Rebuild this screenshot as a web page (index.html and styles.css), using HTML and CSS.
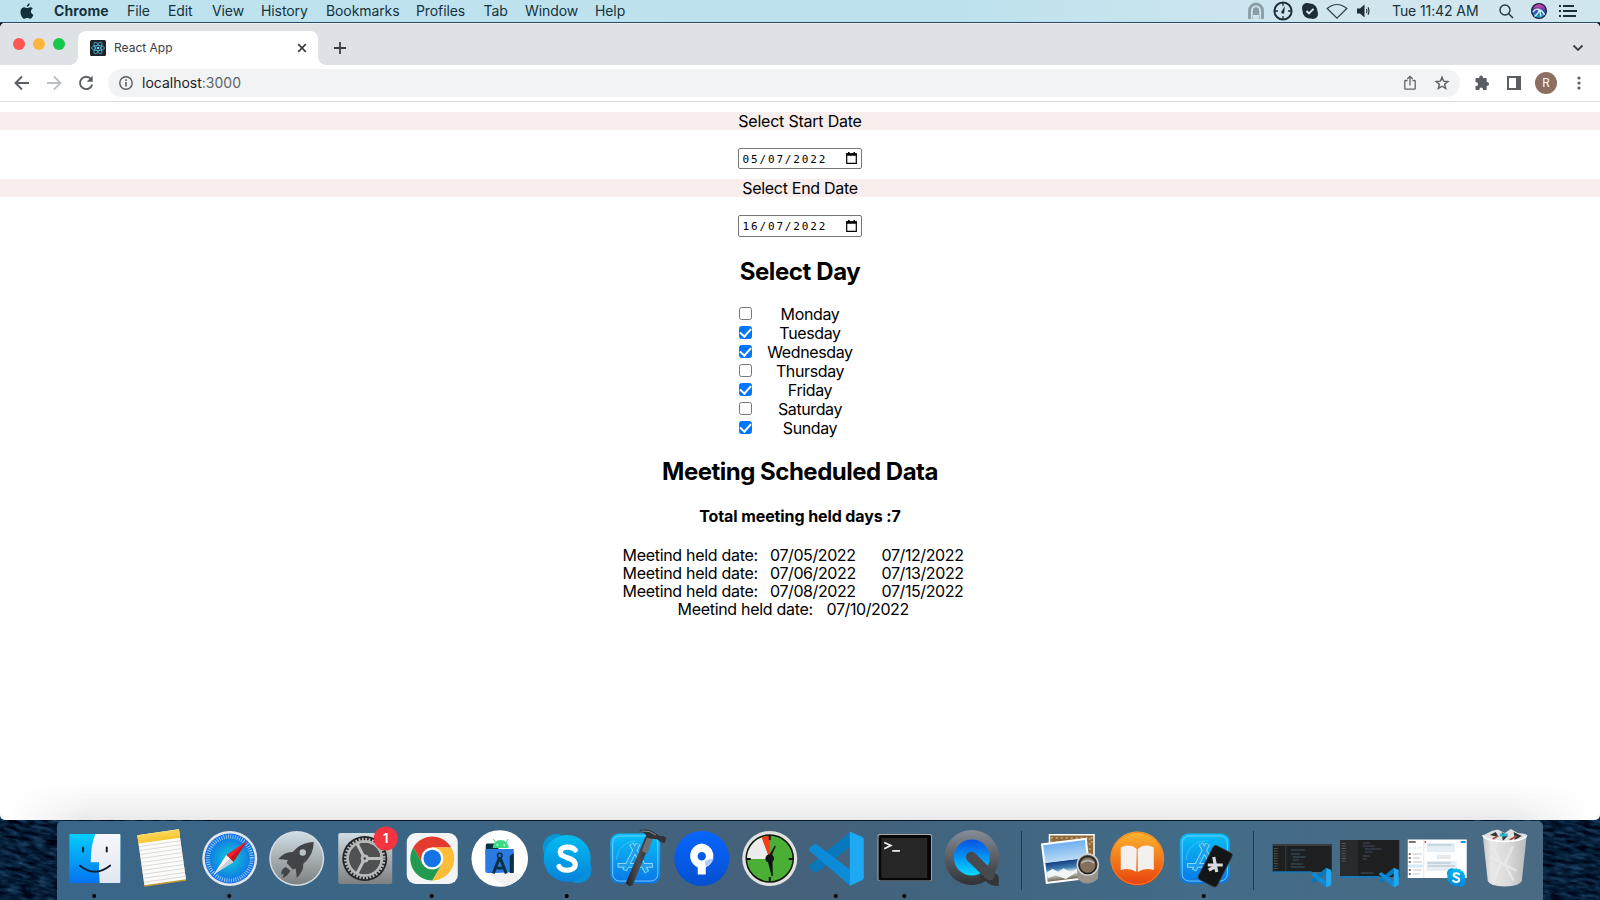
FILE: index.html
```html
<!DOCTYPE html>
<html lang="en">
<head>
<meta charset="utf-8">
<title>React App</title>
<link rel="stylesheet" href="styles.css">
</head>
<body>
<svg class="wallpaper" width="1600" height="83">
  <filter id="waves" x="0" y="0" width="100%" height="100%" color-interpolation-filters="sRGB"><feTurbulence type="fractalNoise" baseFrequency="0.07 0.28" numOctaves="3" seed="4"/><feColorMatrix values="0.3 0 0 0 -0.13  0.45 0 0 0 -0.11  0.55 0 0 0 -0.06  0 0 0 0 1"/></filter>
  <g transform="rotate(12 60 40)"><rect x="-60" y="-60" width="260" height="200" filter="url(#waves)"/></g>
  <g transform="rotate(10 1560 40)"><rect x="1460" y="-60" width="220" height="200" filter="url(#waves)"/></g>
</svg>
<svg width="0" height="0" class="defs">
  <defs>
    <linearGradient id="gFinder" x2="0" y2="1"><stop stop-color="#04cdfd"/><stop offset="1" stop-color="#0573f0"/></linearGradient>
    <linearGradient id="gFinderW" x2="0" y2="1"><stop stop-color="#f6f7fb"/><stop offset="1" stop-color="#e2e7f0"/></linearGradient>
    <linearGradient id="gGrey" x2="0" y2="1"><stop stop-color="#cfdde3"/><stop offset="1" stop-color="#7e8081"/></linearGradient>
    <radialGradient id="gSafari"><stop stop-color="#08cfd8"/><stop offset="1" stop-color="#1569e8"/></radialGradient>
    <linearGradient id="gSkype" x2="0" y2="1"><stop stop-color="#04bdf0"/><stop offset="1" stop-color="#0582db"/></linearGradient>
    <linearGradient id="gXcode" x2="0" y2="1"><stop stop-color="#07c0f7"/><stop offset="1" stop-color="#0b76e6"/></linearGradient>
    <linearGradient id="gTree" x2="0" y2="1"><stop stop-color="#0766ff"/><stop offset="1" stop-color="#0450cf"/></linearGradient>
    <linearGradient id="gQt" x2="0" y2="1"><stop stop-color="#858d98"/><stop offset="1" stop-color="#303134"/></linearGradient>
    <linearGradient id="gQtIn" x2="0" y2="1"><stop stop-color="#0752e4"/><stop offset="1" stop-color="#03d8ff"/></linearGradient>
    <linearGradient id="gBook" x2="0" y2="1"><stop stop-color="#fdb62e"/><stop offset="1" stop-color="#e9410d"/></linearGradient>
    <linearGradient id="gSea" x2="0" y2="1"><stop stop-color="#6fb0f0"/><stop offset=".48" stop-color="#b9daf5"/><stop offset=".5" stop-color="#173f87"/><stop offset=".68" stop-color="#3f7fae"/><stop offset=".8" stop-color="#e3eef0"/><stop offset="1" stop-color="#6d6350"/></linearGradient>
    <linearGradient id="gNote" x2="0" y2="1"><stop stop-color="#fbd95c"/><stop offset="1" stop-color="#f5c52d"/></linearGradient>
    <linearGradient id="gBin" x2="1" y2="0"><stop stop-color="#c5c6c8"/><stop offset=".2" stop-color="#e8e8e9"/><stop offset=".6" stop-color="#d9d9da"/><stop offset="1" stop-color="#b9babc"/></linearGradient>
    <linearGradient id="gHandle" x2="1" y2="0"><stop stop-color="#222327"/><stop offset=".5" stop-color="#4c4e54"/><stop offset="1" stop-color="#1c1d20"/></linearGradient>
    <linearGradient id="gSiri" x2="0" y2="1"><stop stop-color="#e04aa8"/><stop offset=".5" stop-color="#3d3fa8"/><stop offset="1" stop-color="#1aa9c9"/></linearGradient>
    <symbol id="vscode" viewBox="0 0 55 55" overflow="visible">
      <path d="M1.500 34Q-.5 36 1.500 38L5 41Q6.500 42.500 8.500 41L41 16.500V1Z" fill="#0878bd"/>
      <path d="M1.500 20.500Q-.5 18.500 1.500 16.500L5 13.500Q6.500 12.500 8.500 13.800L41 38.500V54.500Z" fill="#0c8bd8"/>
      <path d="M41 .500L53.500 6Q55 7 55 8.500V46.500Q55 48 53.500 49L41 55Z" fill="#1fa9f4"/>
    </symbol>
    <symbol id="skype" viewBox="0 0 50 50" overflow="visible">
      <circle cx="14" cy="14" r="13.500" fill="#0796d8"/><circle cx="36" cy="36" r="13.500" fill="#0a8fdd"/>
      <circle cx="25" cy="25" r="23.500" fill="url(#gSkype)"/>
      <path d="M33 16.500C30 12.500 18 12 18 18.500C18 25.500 33 23 33 31C33 38 20 38.500 16.800 33" fill="none" stroke="#fff" stroke-width="5.200" stroke-linecap="round"/>
    </symbol>
    <symbol id="xcode" viewBox="0 0 52 52" overflow="visible">
      <rect x=".5" y=".5" width="51" height="51" rx="9" fill="url(#gXcode)"/>
      <rect x="3" y="3" width="46" height="46" rx="7" fill="none" stroke="#7fd5fa" stroke-width=".9"/>
      <g fill="none" stroke="#8bd9fb" stroke-width="5"><path d="M15 38L29 11M22 11L38 40M8 33H44" /></g>
      <g fill="none" stroke="#1e9fee" stroke-width="3"><path d="M15.500 37.500L28.700 11.500M22.300 11.500L37.700 39.500M9 33H43"/></g>
      <path d="M7 27A20 20 0 0 1 26 8" fill="none" stroke="#4cc5f8" stroke-width=".8"/>
    </symbol>
  </defs>
</svg>

<header class="menubar">
  <svg class="apple" width="14" height="16" viewBox="0 0 14 16"><path d="M9.800 .2C9.900 2 8.400 3.700 6.800 3.700C6.700 2 8.100.500 9.800.2ZM12.800 5.500C9.900 7.300 10.500 10.500 13.500 11.700C12.700 13.800 11.400 15.800 10 15.800C8.900 15.800 8.500 15.100 7.200 15.100C5.900 15.100 5.400 15.800 4.400 15.800C2.600 15.800.500 12 .500 8.900C.500 5.900 2.300 4.300 4.300 4.300C5.500 4.300 6.500 5.100 7.200 5.100C8 5.100 9 4.200 10.400 4.200C11.400 4.200 12.300 4.700 12.800 5.500Z" fill="#12303b"/></svg>
  <nav class="menus"><b>Chrome</b><span>File</span><span>Edit</span><span>View</span><span>History</span><span>Bookmarks</span><span>Profiles</span><span>Tab</span><span>Window</span><span>Help</span></nav>
  <div class="status">
    <svg width="18" height="20" viewBox="0 0 18 20"><path d="M2.500 18V9.500A6.500 6.500 0 0 1 15.500 9.500V18" fill="none" stroke="#8b9ea6" stroke-width="2.800"/><path d="M5.800 14V9.500A3.200 3.200 0 0 1 12.200 9.500V14Z" fill="#8b9ea6"/><path d="M5.500 14.500V18M12.500 14.500V18" stroke="#a8bac2"/></svg>
    <svg width="20" height="20" viewBox="0 0 20 20"><circle cx="10" cy="10" r="8.600" fill="none" stroke="#1d2e36" stroke-width="2"/><path d="M10 2V5M10 15V18M2 10H5M15 10H18" stroke="#1d2e36" stroke-width="1.300"/><path d="M11.800 5L11.300 11A1.500 1.500 0 1 1 8.900 10Z" fill="#1d2e36"/></svg>
    <svg width="18" height="20" viewBox="0 0 18 20"><circle cx="6" cy="7" r="5" fill="#1d2e36"/><circle cx="12" cy="13" r="5" fill="#1d2e36"/><circle cx="9" cy="10" r="7.500" fill="#1d2e36"/><path d="M5.500 10L8 12.500L12.500 7.800" fill="none" stroke="#d0e6ee" stroke-width="1.900"/></svg>
    <svg class="wifi" width="22" height="18" viewBox="0 0 22 18"><path d="M1.200 5.500Q11-2.500 20.800 5.500L11 15.200Z" fill="none" stroke="#2d414a" stroke-width="1.200" transform="translate(0 1)"/></svg>
    <svg width="15" height="16" viewBox="0 0 15 16"><path d="M1 5.500H4L8.500 1.500V14.500L4 10.500H1Z" fill="#1d2e36"/><path d="M10.500 6Q11.500 8 10.500 10M12 4.300Q14 8 12 11.700" fill="none" stroke="#1d2e36" stroke-width="1.100"/></svg>
    <span class="clock">Tue 11:42 AM</span>
    <svg width="16" height="16" viewBox="0 0 16 16"><circle cx="6" cy="7" r="5" fill="none" stroke="#24363e" stroke-width="1.400"/><path d="M9.700 10.700L14 15" stroke="#24363e" stroke-width="1.500"/></svg>
    <svg class="siri" width="16" height="16" viewBox="0 0 16 16"><circle cx="8" cy="8" r="8" fill="#172047"/><circle cx="8" cy="8" r="6.700" fill="url(#gSiri)"/><path d="M1.800 9Q5 5 8 6.500Q12 8 13.500 12M8 6.500Q8 10 3.500 13.500M8.500 7L10 13.500" fill="none" stroke="#c5f4fa" stroke-width="1.400"/></svg>
    <svg class="list" width="18" height="12" viewBox="0 0 18 12"><path d="M0 1H2M0 6H2M0 11H2M4 1H15M4 6H18M4 11H17" stroke="#1d2e36" stroke-width="1.900"/></svg>
  </div>
</header>

<main class="window">
  <div class="tabstrip">
    <div class="lights"><i class="red"></i><i class="amber"></i><i class="green"></i></div>
    <div class="tab">
      <svg width="16" height="16" viewBox="0 0 16 16"><rect width="16" height="16" rx="1.500" fill="#20232a"/><g fill="none" stroke="#4fb9d6" stroke-width=".8"><ellipse cx="8" cy="8" rx="6.500" ry="2.600"/><ellipse cx="8" cy="8" rx="6.500" ry="2.600" transform="rotate(60 8 8)"/><ellipse cx="8" cy="8" rx="6.500" ry="2.600" transform="rotate(120 8 8)"/></g><circle cx="8" cy="8" r="1.300" fill="#61dafb"/></svg>
      <span>React App</span>
      <svg width="10" height="10" viewBox="0 0 10 10"><path d="M1.200 1.200L8.800 8.800M8.800 1.200L1.200 8.800" stroke="#3c4043" stroke-width="1.700"/></svg>
    </div>
    <svg class="plus" width="12" height="12" viewBox="0 0 12 12"><path d="M6 0V12M0 6H12" stroke="#3c4043" stroke-width="1.800"/></svg>
    <svg class="chev" width="12" height="8" viewBox="0 0 12 8"><path d="M1.500 1.500L6 6L10.500 1.500" fill="none" stroke="#3c4043" stroke-width="1.800"/></svg>
  </div>
  <div class="toolbar">
    <svg width="16" height="16" viewBox="0 0 16 16"><path d="M15 8H2M8 1.500L1.500 8L8 14.500" fill="none" stroke="#5a5e62" stroke-width="1.800"/></svg>
    <svg width="16" height="16" viewBox="0 0 16 16"><path d="M1 8H14M8 1.500L14.500 8L8 14.500" fill="none" stroke="#bcbfc2" stroke-width="1.800"/></svg>
    <svg width="16" height="16" viewBox="0 0 16 16"><path d="M13 4A6.200 6.200 0 1 0 14.200 9.500" fill="none" stroke="#5a5e62" stroke-width="1.900"/><path d="M14.700 .8V6.800H8.700Z" fill="#5a5e62"/></svg>
    <div class="omnibox">
      <svg width="14" height="14" viewBox="0 0 14 14"><circle cx="7" cy="7" r="6.200" fill="none" stroke="#5a5e62" stroke-width="1.400"/><path d="M7 6V10.500M7 3.300V4.900" stroke="#5a5e62" stroke-width="1.600"/></svg>
      <span class="url">localhost<em>:3000</em></span>
      <svg width="12" height="16" viewBox="0 0 12 16"><path d="M3.500 5.500H1.500Q.8 5.500.8 6.200V13.500Q.8 14.200 1.500 14.200H10.500Q11.200 14.200 11.200 13.500V6.200Q11.200 5.500 10.500 5.500H8.500M6 10.500V1.500M3.300 4L6 1.300L8.700 4" fill="none" stroke="#5f6368" stroke-width="1.300"/></svg>
      <svg width="16" height="16" viewBox="0 0 16 16"><path d="M8 2.200L9.600 6.200L13.900 6.500L10.600 9.300L11.700 13.500L8 11.200L4.300 13.500L5.400 9.300L2.100 6.500L6.400 6.200Z" fill="none" stroke="#5a5e62" stroke-width="1.400"/></svg>
    </div>
    <svg width="16" height="16" viewBox="0 0 16 16"><path d="M1.500 4Q1.500 3 2.500 3H5.200V2.500A1.900 1.900 0 0 1 9 2.500V3H11.700Q12.700 3 12.700 4V7H13.200A1.900 1.900 0 0 1 13.200 10.800H12.700V14Q12.700 15 11.700 15H9V14.300A1.800 1.800 0 0 0 5.400 14.300V15H2.500Q1.500 15 1.500 14V11H2.200A1.800 1.800 0 0 0 2.200 7.300H1.500Z" fill="#5a5e62"/></svg>
    <svg width="14" height="14" viewBox="0 0 14 14"><path d="M1 1H13V13H1Z" fill="none" stroke="#5a5e62" stroke-width="2"/><rect x="9" width="5" height="14" fill="#5a5e62"/></svg>
    <span class="avatar">R</span>
    <svg width="4" height="14" viewBox="0 0 4 14"><g fill="#5a5e62"><circle cx="2" cy="2" r="1.600"/><circle cx="2" cy="7" r="1.600"/><circle cx="2" cy="12" r="1.600"/></g></svg>
  </div>

  <section class="page">
    <div class="band start">Select Start Date</div>
    <div class="date"><span>05/07/2022</span><svg width="11" height="12" viewBox="0 0 11 12"><path d="M.7 2H10.300V11.300H.7Z" fill="none" stroke="#000" stroke-width="1.200"/><path d="M0 1.300H11V3.800H0ZM2 0H3.500V2H2ZM7.500 0H9V2H7.500Z"/></svg></div>
    <div class="band">Select End Date</div>
    <div class="date end"><span>16/07/2022</span><svg width="11" height="12" viewBox="0 0 11 12"><path d="M.7 2H10.300V11.300H.7Z" fill="none" stroke="#000" stroke-width="1.200"/><path d="M0 1.300H11V3.800H0ZM2 0H3.500V2H2ZM7.500 0H9V2H7.500Z"/></svg></div>
    <h2 class="pick">Select Day</h2>
    <div class="days">
      <label><input type="checkbox"><span>Monday</span></label>
      <label><input type="checkbox" checked><span>Tuesday</span></label>
      <label><input type="checkbox" checked><span>Wednesday</span></label>
      <label><input type="checkbox"><span>Thursday</span></label>
      <label><input type="checkbox" checked><span>Friday</span></label>
      <label><input type="checkbox"><span>Saturday</span></label>
      <label><input type="checkbox" checked><span>Sunday</span></label>
    </div>
    <h2 class="sched">Meeting Scheduled Data</h2>
    <h4>Total meeting held days :7</h4>
    <div class="rows">
      <div><span>Meetind held date:</span><span>07/05/2022</span><span>07/12/2022</span></div>
      <div><span>Meetind held date:</span><span>07/06/2022</span><span>07/13/2022</span></div>
      <div><span>Meetind held date:</span><span>07/08/2022</span><span>07/15/2022</span></div>
      <div class="single"><span>Meetind held date:</span><span>07/10/2022</span></div>
    </div>
  </section>
  <div class="shade"></div>
</main>

<footer class="dock">
  <svg class="app" viewBox="-33.750 0 67.500 79"><rect x="-25.400" y="13" width="51" height="49" rx="1" fill="url(#gFinder)"/><path d="M.6 13H24.600Q25.600 13 25.600 14V61Q25.600 62 24.600 62H5Q4 52 4.300 41.300H-4Q-4 24 .6 13Z" fill="url(#gFinderW)"/><path d="M-11.700 26.500V30.500M12 26.500V30.500" stroke="#14202c" stroke-width="2" stroke-linecap="round"/><path d="M-15 44.500Q0 57 15.500 44.500" fill="none" stroke="#10202e" stroke-width="1.700" stroke-linecap="round"/><circle cx="-.5" cy="75" r="2"/></svg>
  <svg class="app" viewBox="-33.750 0 67.500 79"><g transform="rotate(-8 0 37)"><rect x="-21" y="11" width="42" height="52" fill="#c49a35"/><rect x="-21" y="11" width="42" height="50.500" fill="#fbfbfa"/><path d="M-21 22.500H21M-21 26.500H21M-21 30.500H21M-21 34.500H21M-21 38.500H21M-21 42.500H21M-21 46.500H21M-21 50.500H21M-21 54.500H21M-21 58.500H21" stroke="#d4d3d0" stroke-width=".8"/><rect x="-21" y="11" width="42" height="8.500" fill="url(#gNote)"/></g></svg>
  <svg class="app" viewBox="-33.750 0 67.500 79"><circle cy="37.500" r="27.500" fill="#e3e6ea"/><circle cy="37.500" r="25" fill="url(#gSafari)"/><circle cy="37.500" r="22" fill="none" stroke="#a5dcf8" stroke-width="4" stroke-dasharray=".8 1.504"/><path d="M17.500 20L-3.500 34L3.500 41Z" fill="#f3202c"/><path d="M17.500 20L0 37.500L3.500 41Z" fill="#c21620"/><path d="M-16 53.500L-3.500 34L3.500 41Z" fill="#f5f5f5"/><path d="M-16 53.500L0 37.500L3.500 41Z" fill="#c9cdd3"/><circle cx="-.5" cy="75" r="2"/></svg>
  <svg class="app" viewBox="-33.750 0 67.500 79"><circle cy="37.500" r="27.500" fill="#d5dbdf"/><circle cy="37.500" r="26" fill="url(#gGrey)"/><path d="M17 21Q7 21-.5 27.500L-4 31Q-12 30.500-18.500 38L-9 39L-10 42L-4 48.500L-1 47.500L0 57Q7 50 6.500 43Q17 34 17 21ZM-11 46Q-16 48-15.500 54Q-14 52.500-13 52.500L-14 57Q-8 54-6.500 49.500Z" fill="#414449"/><circle cx="6" cy="31.500" r="3.200" fill="#b9c4ca"/></svg>
  <svg class="app" viewBox="-33.750 0 67.500 79"><rect x="-26.500" y="12" width="54" height="51" rx="2" fill="url(#gGrey)"/><circle cy="37.500" r="22.500" fill="#242526"/><circle cy="37.500" r="17" fill="none" stroke="#b5b7b7" stroke-width="3"/><circle cy="37.500" r="19.200" fill="none" stroke="#b5b7b7" stroke-width="3" stroke-dasharray="1.800 1.550"/><circle cy="37.500" r="15.500" fill="#505153"/><path d="M0 37.500L-7.500 23M0 37.500H17M0 37.500L-7.500 52" stroke="#bcbdbc" stroke-width="3"/><circle cy="37.500" r="4" fill="#bcbdbc"/><circle cy="37.500" r="1.300" fill="#444"/><circle cx="21" cy="17.500" r="12" fill="#f6343f"/><text class="badge" x="21" y="22">1</text></svg>
  <svg class="app" viewBox="-33.750 0 67.500 79"><rect x="-25" y="12" width="51" height="51" rx="9" fill="#f3f4f6"/><g transform="translate(.5 37.500)"><path d="M-19-11A22 22 0 0 1 19-11H0L-9.500 5.500Z" fill="#e33b2e"/><path d="M19-11A22 22 0 0 1 0 22L9.500 5.500L0-11Z" fill="#fdbd38"/><path d="M0 22A22 22 0 0 1-19-11L-9.500 5.500Q-3 12 9.500 5.500Z" fill="#229a50"/><circle r="11" fill="#fff"/><circle r="8.800" fill="#1473e6"/></g><circle cx="0" cy="75" r="2"/></svg>
  <svg class="app" viewBox="-33.750 0 67.500 79"><circle cy="37.500" r="28.300" fill="#fff"/><path d="M0 52L15 52L23 54A28 28 0 0 1 4 65L-11 53Z" fill="#f0f1f2"/><path d="M-14 29V24Q-14 22.500-12.500 22.500H-5L-1 28V34H-14Z" fill="#0a3042"/><path d="M-7 27A8 8 0 0 1 9 27Z" fill="#3ddc84"/><path d="M-4.500 21L-6.500 18M6.500 21L8.500 18" stroke="#3ddc84"/><circle cx="-2.500" cy="24" r=".8" fill="#fff"/><circle cx="4.500" cy="24" r=".8" fill="#fff"/><path d="M-14.500 28H14V50Q14 52-12 52Q-14.500 52-14.500 50Z" fill="#2b7ae0"/><path d="M-6.500 52.500L0 36L6.500 52.500M-5 46Q0 48.500 5 46" fill="none" stroke="#0a3042" stroke-width="3"/><circle cy="34.500" r="2.300" fill="#2b7ae0" stroke="#0a3042" stroke-width="1.500"/><path d="M10 52V35L14 32V52Z" fill="#0a3042"/></svg>
  <svg class="app" viewBox="-33.750 0 67.500 79"><use href="#skype" x="-24.500" y="12.500" width="50" height="50"/><circle cx="0" cy="75" r="2"/></svg>
  <svg class="app" viewBox="-33.750 0 67.500 79"><use href="#xcode" x="-25" y="12" width="51" height="51"/><path d="M11 15L17 18L-2 64Q-6 67-9 62Z" fill="url(#gHandle)"/><path d="M13 14L18.500 17L12.500 33L7 30Z" fill="#6d7076"/><path d="M4 9.500Q14 6.500 20 12L25 15L29 15L31.500 17L30 22L25.500 21L23 18.500L12.500 17Q11 11 4 9.500Z" fill="#303237"/><path d="M7 10Q15 9 21 14" fill="none" stroke="#8c9098"/></svg>
  <svg class="app" viewBox="-33.750 0 67.500 79"><circle cy="37.500" r="27.500" fill="url(#gTree)"/><path d="M0 22.500A12.500 12.500 0 0 0-4 46.500V53.500H4V46.500A12.500 12.500 0 0 0 0 22.500ZM0 31A4.200 4.200 0 1 1 0 39.400A4.200 4.200 0 1 1 0 31Z" fill="#fff" fill-rule="evenodd"/><path d="M3 40L12 37Q11 43 4 46Z" fill="#9fc1fb" opacity=".8"/></svg>
  <svg class="app" viewBox="-33.750 0 67.500 79"><circle cy="37.500" r="27.500" fill="#e1e2e0"/><circle cy="37.500" r="23.500" fill="#4caf35" stroke="#101510" stroke-width="1.500"/><path d="M0 38H-22.800A22.800 22.800 0 0 1-8 16.500Z" fill="#ececec"/><path d="M0 38L-8 16.500Q-4 14.700 0 14.700Z" fill="#fb3a1b"/><path d="M0 14V19M0 56V61M-23.500 38H-19M19 38H23.500" stroke="#111" stroke-width="2"/><path d="M0 37.500L5.500 25L-1.500 37ZM-2 37.500L2.500 55L2 37Z" stroke="#0d1a14" stroke-width="1.300"/><circle cy="37.500" r="4.300" fill="#0e1713"/></svg>
  <svg class="app" viewBox="-33.750 0 67.500 79"><use href="#vscode" x="-28" y="10" width="55" height="55"/><circle cx="-1" cy="75" r="2"/></svg>
  <svg class="app" viewBox="-33.750 0 67.500 79"><rect x="-27.200" y="13" width="54.500" height="47" rx="2" fill="#aaa9a6"/><rect x="-26.200" y="14" width="52.500" height="45.500" rx="1.500" fill="#060606"/><rect x="-23.500" y="17" width="46" height="40" fill="#262626"/><path d="M-20.500 21.500L-14 24.500L-20.500 27.800M-12.500 29.800H-4.800" fill="none" stroke="#eee" stroke-width="1.800"/><circle cx="-.5" cy="75" r="2"/></svg>
  <svg class="app" viewBox="-33.750 0 67.500 79"><circle cy="36.500" r="27.500" fill="url(#gQt)"/><path d="M10 48L20 51Q27 53 27 57V65Q18 65 14 60L8 56Z" fill="#333437"/><circle cy="36.500" r="18" fill="url(#gQtIn)"/><path d="M-.5 36L18 54" stroke="#48494e" stroke-width="10.500" stroke-linecap="round"/></svg>
  <i class="sep"></i>
  <svg class="app" viewBox="-33.750 0 67.500 79"><rect x="-21" y="13" width="46" height="38" fill="#fff"/><rect x="-19.500" y="14.500" width="43" height="35" fill="#8d6a3f"/><path d="M-19 17H23M-19 21H23M20 17V48" stroke="#c29c66" stroke-dasharray="2 3" stroke-width="2"/><g transform="rotate(-7 -4 40)"><rect x="-26.500" y="19.500" width="46" height="41" fill="#fff"/><rect x="-24.500" y="21.500" width="42" height="37" fill="url(#gSea)"/><path d="M-24 49L-18 46L-13 50L-7 47L0 52L8 48L16 51V55L4 53L-6 58L-16 53L-24 55Z" fill="#f1f6f5"/></g><path d="M7 44L8 58Q17 67 28 58L29 44Z" fill="#9a948a"/><circle cx="18" cy="43.500" r="10.500" fill="#59544d" stroke="#d2d3d3" stroke-width="1.500"/><circle cx="18" cy="44" r="8.500" fill="#84705a" stroke="#222" stroke-width="1.400"/><path d="M11.500 42Q18 37 24.500 42" fill="none" stroke="#aeb4b3" stroke-width="2"/></svg>
  <svg class="app" viewBox="-33.750 0 67.500 79"><circle cx=".5" cy="37.500" r="27" fill="url(#gBook)"/><circle cx=".5" cy="37.500" r="26" fill="none" stroke="#f77f27"/><path d="M0 28Q-7 22-16 26.500V49Q-7 46-.5 51ZM1 28Q8 22 17 26.500V49Q8 46 1 51Z" fill="#f3f0ed"/></svg>
  <svg class="app" viewBox="-33.750 0 67.500 79"><use href="#xcode" x="-25.500" y="12" width="51" height="51"/><g transform="rotate(27 10 45)"><rect x="0" y="26" width="21" height="38" rx="3" fill="#141517" stroke="#303238" stroke-width=".8"/></g><path d="M9 36L12 51M3 44L18 44M12 45L4 49" stroke="#d8dade" stroke-width="3.200"/><circle cx="-1" cy="75" r="2"/></svg>
  <i class="sep"></i>
  <svg class="app" viewBox="-33.750 0 67.500 79"><rect x="-29" y="23" width="59" height="28" fill="#1e1f20"/><path d="M-29 24H30" stroke="#45474a" stroke-width="1.500"/><path d="M-26 27V48" stroke="#44504b" stroke-width="4" stroke-dasharray="1 1.500"/><path d="M-11 29H3M-11 33H-2M-9 36H4M-9 39H-3M-11 43H1M-11 46H3" stroke="#3f5965" stroke-width="1"/><path d="M-16 25V50" stroke="#37393b"/><path d="M-29 51H10" stroke="#1678b8" stroke-width="1.500"/><use href="#vscode" x="9.500" y="46.500" width="20" height="20"/></svg>
  <svg class="app" viewBox="-33.750 0 67.500 79"><rect x="-29.500" y="19" width="59" height="37" fill="#1e1f20"/><rect x="-29.500" y="19" width="18" height="37" fill="#292a2b"/><path d="M-26 22V42" stroke="#53575a" stroke-width="4" stroke-dasharray="1 1.500"/><path d="M-7 22H0M-7 25H5M-5 28H12M-5 31H3M-7 35H0M-7 38H-3M-9 52H4" stroke="#3e505f"/><path d="M-29.500 56H10" stroke="#1678b8" stroke-width="2"/><use href="#vscode" x="9" y="46.500" width="20" height="20"/></svg>
  <svg class="app" viewBox="-33.750 0 67.500 79"><rect x="-29" y="18.500" width="59" height="38.500" fill="#fff"/><path d="M-13 19V57" stroke="#e5e7ea"/><path d="M-28 21H-21" stroke="#777" stroke-width="2"/><path d="M-28 27H-15" stroke="#b9dcf5" stroke-dasharray="2 3"/><path d="M-27 32V56" stroke="#8a6f5f" stroke-width="2" stroke-dasharray="2 2"/><path d="M-24 33H-15M-24 37H-17M-24 41H-15M-24 45H-17M-24 49H-15M-24 53H-17" stroke="#bcc4cc"/><path d="M-28 45H-14" stroke="#d3eafa" stroke-width="3"/><rect x="-10" y="22" width="28" height="9" fill="#e5eef5"/><rect x="-10" y="40" width="30" height="10" fill="#e5eef5"/><path d="M-9 24H15M-9 42H14M-9 45H18" stroke="#adbac5"/><circle cx="-11.500" cy="21" r="1" fill="#e45"/><rect x="24" y="20" width="5" height="2" fill="#1296e8"/><path d="M0 36H14" stroke="#e6e8ea" stroke-width="4"/><use href="#skype" x="10" y="47" width="19" height="19"/></svg>
  <svg class="app" viewBox="-33.750 0 67.500 79"><path d="M-21 14L-13 10L-7 8.500L0 12L6 8L13 12L21 13L20 21H-19Z" fill="#dfe1e2"/><path d="M-15 14L-9 11L-6 16ZM-3 11L3 15L-2 20ZM9 11L17 15L10 19Z" fill="#333438"/><path d="M-5 14H3" stroke="#2bb8c4" stroke-width="3"/><path d="M-12 18L-7 15M5 19L12 15" stroke="#a4523d" stroke-width="2"/><path d="M-22 14Q-20 20 0 20.500Q20 20 22 14L17 60Q15 65 0 65.500Q-15 65-17 60Z" fill="url(#gBin)"/><path d="M-22 14Q-20 20 0 20.500Q20 20 22 14" fill="none" stroke="#fff" stroke-width="1.500"/><path d="M-12 26L-4 42L-10 58M8 25L0 43L9 60M-14 36L12 50" fill="none" stroke="#eeeeef" stroke-width="2.500" opacity=".6"/></svg>
</footer>
</body>
</html>
```

FILE: styles.css
```css
* { box-sizing: border-box; }
body { margin: 0; width: 1600px; height: 900px; overflow: hidden; display: flex; flex-direction: column; background: #06172a; font-family: Inter, "Liberation Sans", sans-serif; color: #000; }
svg { flex: none; display: block; }
.wallpaper { position: absolute; left: 0; bottom: 0; z-index: -1; }
.defs { position: absolute; }

.menubar { height: 23px; flex: none; display: flex; align-items: center; padding: 0 23px 1px 20px; background: linear-gradient(90deg, #bee3ef 0%, #bde2ee 60%, #d2e6ee 85%, #d0e6ef 100%); border-bottom: 1px solid #234a66; color: #15323d; font-size: 14px; }
.apple { margin-right: 20px; }
.menus { display: grid; grid-template-columns: 73px 41px 44px 49px 65px 90px 67.500px 41.500px 70px 60px; letter-spacing: -.1px; }
.menus b { font-weight: 700; letter-spacing: .1px; }
.menus span, .menus b, .clock { white-space: nowrap; line-height: 22px; }
.status { margin-left: auto; display: flex; align-items: center; gap: 8px; }
.wifi { margin-left: -1px; }
.clock { margin: 0 13px; width: 86px; letter-spacing: -.1px; }
.siri { margin-left: 8px; }
.list { margin-left: 4px; }

.window { height: 797px; flex: none; display: flex; flex-direction: column; background: #fff; border-radius: 5px; overflow: hidden; position: relative; }
.tabstrip { height: 42px; flex: none; display: flex; align-items: center; background: #dee1e6; border-top: 1px solid #eef0f2; padding: 0 16px 0 13px; }
.lights { display: flex; gap: 8px; margin: 0 13px 1px 0; }
.lights i { width: 12px; height: 12px; border-radius: 50%; }
.red { background: #fc5753; }
.amber { background: #fdb63c; }
.green { background: #16c84c; }
.tab { width: 240px; height: 34px; align-self: flex-end; display: flex; align-items: center; gap: 8px; padding: 0 11px 0 12px; background: #fff; border-radius: 8px 8px 0 0; font-size: 12px; color: #3c4043; position: relative; }
.tab::before, .tab::after { content: ""; position: absolute; bottom: 0; width: 8px; height: 8px; }
.tab::before { left: -8px; background: radial-gradient(circle at 0 0, #dee1e6 7.500px, #fff 8px); }
.tab::after { right: -8px; background: radial-gradient(circle at 100% 0, #dee1e6 7.500px, #fff 8px); }
.tab span { flex: 1; padding-bottom: 2px; }
.plus { margin: 7px 0 0 16px; }
.chev { margin: 7px 0 0 auto; }

.toolbar { height: 37px; flex: none; display: flex; align-items: center; border-bottom: 1px solid #dadce0; padding: 0 19px 0 14px; }
.toolbar > svg:nth-child(-n+2) { margin-right: 16px; }
.toolbar > svg:nth-child(3) { margin-right: 14px; }
.omnibox { width: 1352px; height: 28px; border-radius: 14px; background: #f1f3f4; display: flex; align-items: center; padding: 0 10px 0 11px; font-size: 14px; color: #202124; margin-right: 14px; }
.omnibox svg:nth-of-type(2) { margin: 0 18px 0 auto; }
.url { margin-left: 9px; padding-bottom: 2px; }
.url em { font-style: normal; color: #5f6368; }
.omnibox + svg { margin-right: 17px; }
.avatar { width: 22px; height: 22px; border-radius: 50%; background: #8d6e63; color: #fff; font-size: 11.500px; line-height: 22px; text-align: center; margin: 0 20px 0 14px; }

.page { padding-top: 10px; display: flex; flex-direction: column; align-items: center; font-size: 16px; line-height: 18px; letter-spacing: -.3px; }
.band { align-self: stretch; height: 18px; background: #f8eeed; text-align: center; }
.start { letter-spacing: -.22px; }
.date { width: 124px; height: 21px; margin: 18px 0 10px; border: 1px solid #767676; border-radius: 2px; display: flex; align-items: center; justify-content: space-between; padding: 0 4px 1px 3.500px; font: 11px/18px "DejaVu Sans Mono", monospace; letter-spacing: 1.850px; }
.date span { padding-top: 3px; }
.end { height: 22px; }
.end span { padding-top: 2px; }
h2 { margin: 0; font-size: 24px; line-height: 28px; font-weight: 700; letter-spacing: -.4px; }
.pick { margin-top: 11px; }
.days { margin-top: 19px; width: 130px; padding-left: 3px; }
.days label { display: flex; height: 19px; align-items: flex-start; }
.days input { flex: none; appearance: none; margin: 2px 0 0 1px; width: 13px; height: 13px; border: 1px solid #767676; border-radius: 2.500px; background: #fff; }
.days input:checked { border-color: #0075ff; background: #0075ff; display: grid; place-items: center; }
.days input:checked::before { content: ""; width: 5px; height: 9px; border: solid #fff; border-width: 0 2px 2px 0; transform: translateY(-1px) rotate(42deg); }
.days span { flex: none; width: 116px; text-align: center; letter-spacing: -.38px; }
.sched { margin-top: 20px; letter-spacing: -.5px; }
h4 { margin: 21px 0; font-size: 16px; line-height: 18px; font-weight: 700; letter-spacing: -.1px; }
.rows { width: 355px; white-space: nowrap; }
.rows div { display: grid; grid-template-columns: 147.500px 111.500px 96px; }
.rows span + span { letter-spacing: -.4px; }
.rows .single { grid-template-columns: 149px 111px; margin-left: 55px; }

.shade { position: absolute; left: 0; right: 0; bottom: 0; height: 38px; background: linear-gradient(#e9e9e900, #f4f4f4 60%, #e9e9e9); mask-image: linear-gradient(90deg, transparent 5px, #000 90px, #000 1510px, transparent 1595px); }

.dock { margin: 1px 57px 0; height: 79px; flex: none; display: flex; padding: 0 3.650px; border-radius: 5px 5px 0 0; background: linear-gradient(90deg, #3a6689 0%, #3b6584 25%, #46617a 48%, #41647f 60%, #426c88 77%, #4a6a83 100%); }
.app { width: 67.500px; height: 79px; }
.sep { width: 30px; height: 59px; margin-top: 10px; background: linear-gradient(90deg, transparent 15px, #183c56 15px, #183c56 16px, transparent 16px); }
.badge { font: 600 13px Inter, sans-serif; fill: #fff; text-anchor: middle; }
```
